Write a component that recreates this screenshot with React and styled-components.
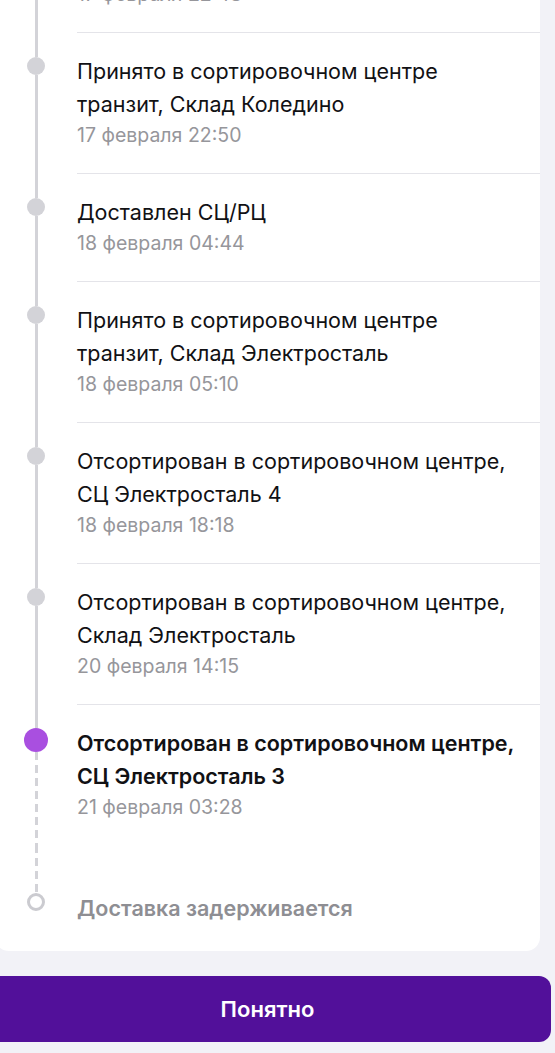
import React from 'react';
import styled, { createGlobalStyle } from 'styled-components';

const GlobalStyle = createGlobalStyle`
  body {
    margin: 0;
    background: #f2f2f7;
    overflow: hidden;
    font-family: Inter, "Noto Sans", sans-serif;
    -webkit-font-smoothing: antialiased;
  }
`;

const Screen = styled.div`
  width: 567px;
  margin: -108px 0 0 -16px;
`;

const Card = styled.div`
  margin: 0 11px;
  background: #ffffff;
  border-radius: 0 0 14px 14px;
`;

const Step = styled.div`
  display: flex;
`;

const Rail = styled.div`
  width: 82px;
  flex-shrink: 0;
  display: flex;
  flex-direction: column;
  align-items: center;
`;

const Segment = styled.div`
  width: 3px;
  height: ${p => (p.$grow ? 'auto' : `${p.$h}px`)};
  flex: ${p => (p.$grow ? 1 : 'none')};
  background: ${p =>
    p.$dashed
      ? 'repeating-linear-gradient(to bottom, #d3d3d8 0 8px, transparent 8px 13px)'
      : '#d3d3d8'};
`;

const Dot = styled.div`
  flex: none;
  width: ${p => p.$size}px;
  height: ${p => p.$size}px;
  border-radius: 50%;
  box-sizing: border-box;
  background: ${p => (p.$kind === 'active' ? '#a94fe0' : p.$kind === 'hollow' ? '#fff' : '#d3d3d8')};
  border: ${p => (p.$kind === 'hollow' ? '3px solid #cbcbd0' : 'none')};
`;

const Body = styled.div`
  flex: 1;
  padding: ${p => p.$pad || '22px 12px 23px 0'};
  border-top: ${p => (p.$noLine ? 'none' : '1px solid #e4e4e9')};
`;

const Title = styled.div`
  font-size: 21.5px;
  line-height: 33px;
  color: ${p => (p.$muted ? '#8e8e93' : '#111114')};
  font-weight: ${p => (p.$bold ? 600 : 400)};
  white-space: nowrap;
`;

const Date = styled.div`
  font-size: 19.5px;
  line-height: 29px;
  color: #96969b;
`;

const Button = styled.button`
  display: block;
  width: 100%;
  height: 66px;
  margin-top: 25px;
  border: none;
  border-radius: 12px;
  background: #52109a;
  color: #ffffff;
  font-family: Inter, "Noto Sans", sans-serif;
  font-size: 22px;
  font-weight: 600;
`;

const steps = [
  { lines: ['Отсортирован в сортировочном центре,', 'СЦ Коледино'], date: '17 февраля 22:48' },
  { lines: ['Принято в сортировочном центре', 'транзит, Склад Коледино'], date: '17 февраля 22:50' },
  { lines: ['Доставлен СЦ/РЦ'], date: '18 февраля 04:44' },
  { lines: ['Принято в сортировочном центре', 'транзит, Склад Электросталь'], date: '18 февраля 05:10' },
  { lines: ['Отсортирован в сортировочном центре,', 'СЦ Электросталь 4'], date: '18 февраля 18:18' },
  { lines: ['Отсортирован в сортировочном центре,', 'Склад Электросталь'], date: '20 февраля 14:15' },
];

function App() {
  return (
    <>
      <GlobalStyle />
      <Screen>
        <Card>
          {steps.map((s, i) => (
            <Step key={i}>
              <Rail>
                <Segment $h={25} />
                <Dot $size={18} />
                <Segment $grow />
              </Rail>
              <Body $noLine={i === 0}>
                <Title>
                  {s.lines.map(l => <div key={l}>{l}</div>)}
                </Title>
                <Date>{s.date}</Date>
              </Body>
            </Step>
          ))}
          <Step>
            <Rail>
              <Segment $h={24} />
              <Dot $size={24} $kind="active" />
              <Segment $grow $dashed />
            </Rail>
            <Body>
              <Title $bold>
                <div>Отсортирован в сортировочном центре,</div>
                <div>СЦ Электросталь 3</div>
              </Title>
              <Date>21 февраля 03:28</Date>
            </Body>
          </Step>
          <Step>
            <Rail>
              <Segment $h={48} $dashed />
              <Dot $size={18} $kind="hollow" />
            </Rail>
            <Body $noLine $pad="47px 12px 26px 0">
              <Title $muted $bold>Доставка задерживается</Title>
            </Body>
          </Step>
        </Card>
        <Button>Понятно</Button>
      </Screen>
    </>
  );
}

export default App;
